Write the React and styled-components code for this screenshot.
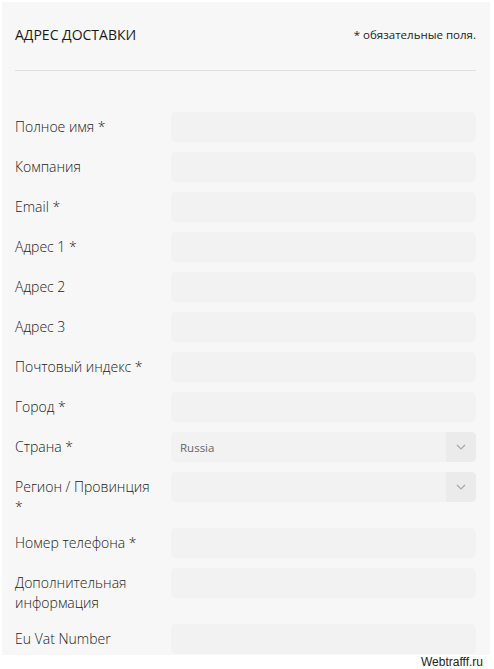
import React from "react";
import styled, { createGlobalStyle } from "styled-components";

const Global = createGlobalStyle`
  html, body { margin: 0; padding: 0; background: #ffffff; }
  body { font-family: "Open Sans", "Noto Sans", sans-serif; }
  * { box-sizing: border-box; }
`;

const Page = styled.div`
  width: 494px;
  padding: 2px 4px 0 2px;
`;

const Panel = styled.div`
  background: #f7f7f7;
  padding: 0 14px 1px 13px;
`;

const Header = styled.div`
  display: flex;
  justify-content: space-between;
  align-items: center;
  padding: 24px 0 26px;
  border-bottom: 1px solid #e0e0e0;
`;

const Title = styled.h2`
  margin: 0;
  font-size: 14px;
  font-weight: 400;
  line-height: 18px;
  color: #1a1a1a;
  text-transform: uppercase;
`;

const Note = styled.span`
  font-size: 11.5px;
  line-height: 18px;
  color: #222;
`;

const Form = styled.div`
  display: grid;
  grid-template-columns: 140px 1fr;
  column-gap: 16px;
  row-gap: 10px;
  padding-top: 41px;
`;

const Label = styled.label`
  font-size: 14px;
  font-weight: 300;
  line-height: 20px;
  color: #222;
  padding: 5px 0 1px;
`;

const Field = styled.div`
  height: 30px;
  border-radius: 5px;
  background: #f2f2f2;
  display: flex;
  align-items: center;
  overflow: hidden;
`;

const Value = styled.span`
  flex: 1;
  padding-left: 9px;
  font-size: 11.5px;
  color: #666;
`;

const Caret = styled.span`
  width: 30px;
  height: 30px;
  background: #ebebeb;
  display: flex;
  align-items: center;
  justify-content: center;
  margin-left: auto;
`;

const Footer = styled.div`
  height: 14px;
  display: flex;
  justify-content: flex-end;
  align-items: center;
  padding-right: 7px;
  font-family: "Liberation Sans", Arial, sans-serif;
  font-size: 12px;
  color: #222;
`;

const Chevron = () => (
  <svg width="10" height="6" viewBox="0 0 10 6">
    <path d="M1 1l4 4 4-4" fill="none" stroke="#a8a8a8" strokeWidth="1.2" />
  </svg>
);

const fields = [
  { label: "Полное имя *" },
  { label: "Компания" },
  { label: "Email *" },
  { label: "Адрес 1 *" },
  { label: "Адрес 2" },
  { label: "Адрес 3" },
  { label: "Почтовый индекс *" },
  { label: "Город *" },
  { label: "Страна *", select: true, value: "Russia" },
  { label: "Регион / Провинция *", select: true },
  { label: "Номер телефона *" },
  { label: "Дополнительная информация" },
  { label: "Eu Vat Number" },
];

export default function App() {
  return (
    <Page>
      <Global />
      <Panel>
        <Header>
          <Title>Адрес доставки</Title>
          <Note>* обязательные поля.</Note>
        </Header>
        <Form>
          {fields.map((f) => (
            <React.Fragment key={f.label}>
              <Label>{f.label}</Label>
              <Field>
                {f.select && <Value>{f.value}</Value>}
                {f.select && (
                  <Caret>
                    <Chevron />
                  </Caret>
                )}
              </Field>
            </React.Fragment>
          ))}
        </Form>
      </Panel>
      <Footer>Webtrafff.ru</Footer>
    </Page>
  );
}
